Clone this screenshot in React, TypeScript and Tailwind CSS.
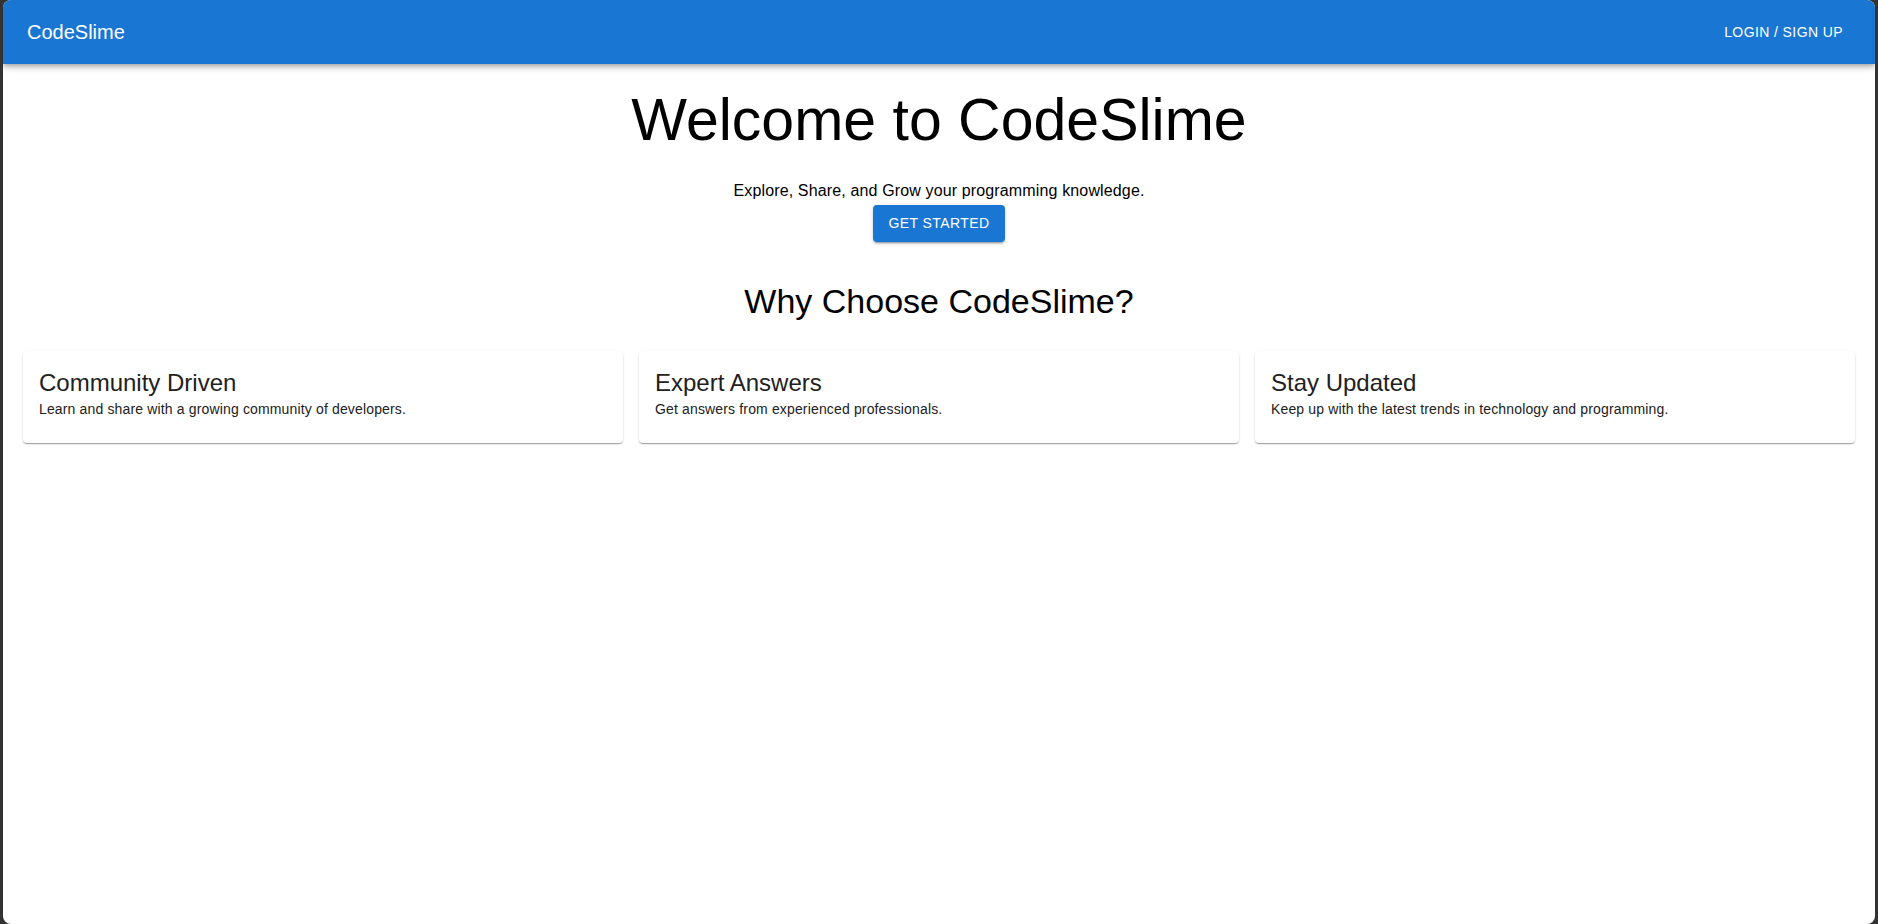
import React from 'react';

const features = [
    { title: 'Community Driven', text: 'Learn and share with a growing community of developers.' },
    { title: 'Expert Answers', text: 'Get answers from experienced professionals.' },
    { title: 'Stay Updated', text: 'Keep up with the latest trends in technology and programming.' },
];

const App: React.FC = () => {
    return (
        <div className="h-screen w-full bg-[#333333] px-[3px] font-['Liberation_Sans',Arial,sans-serif]">
            <div className="flex h-full flex-col overflow-hidden rounded-lg bg-white">
                <header className="relative z-10 flex h-16 shrink-0 items-center justify-between bg-[#1976d2] pl-6 pr-6 text-white shadow-[0px_2px_4px_-1px_rgba(0,0,0,0.2),0px_4px_5px_0px_rgba(0,0,0,0.14),0px_1px_10px_0px_rgba(0,0,0,0.12)]">
                    <h6 className="text-[20px] leading-[1.6]">CodeSlime</h6>
                    <button className="rounded px-2 py-[6px] text-[14px] uppercase leading-[1.75] tracking-[0.4px]">
                        Login / Sign Up
                    </button>
                </header>

                <main className="flex flex-col items-center px-5 pt-5 text-center">
                    <h2 className="text-[59px] leading-[72px] text-black">Welcome to CodeSlime</h2>
                    <p className="mt-[23px] text-[16px] leading-6 tracking-[0.14px] text-black">
                        Explore, Share, and Grow your programming knowledge.
                    </p>
                    <button className="mt-[2px] h-[37px] rounded bg-[#1976d2] px-4 text-[14px] uppercase tracking-[0.4px] text-white shadow-[0px_3px_1px_-2px_rgba(0,0,0,0.2),0px_2px_2px_0px_rgba(0,0,0,0.14),0px_1px_5px_0px_rgba(0,0,0,0.12)]">
                        Get Started
                    </button>

                    <h4 className="mt-[38px] text-[34px] leading-[42px] text-black">Why Choose CodeSlime?</h4>

                    <div className="mt-[29px] grid w-full grid-cols-3 gap-4 text-left">
                        {features.map(f => (
                            <div
                                key={f.title}
                                className="rounded bg-white px-4 pb-6 pt-4 text-[#212121] shadow-[0px_2px_1px_-1px_rgba(0,0,0,0.2),0px_1px_1px_0px_rgba(0,0,0,0.14),0px_1px_3px_0px_rgba(0,0,0,0.12)]"
                            >
                                <h5 className="text-[24px] leading-8">{f.title}</h5>
                                <p className="text-[14px] leading-5 tracking-[0.15px]">{f.text}</p>
                            </div>
                        ))}
                    </div>
                </main>
            </div>
        </div>
    );
};

export default App;
